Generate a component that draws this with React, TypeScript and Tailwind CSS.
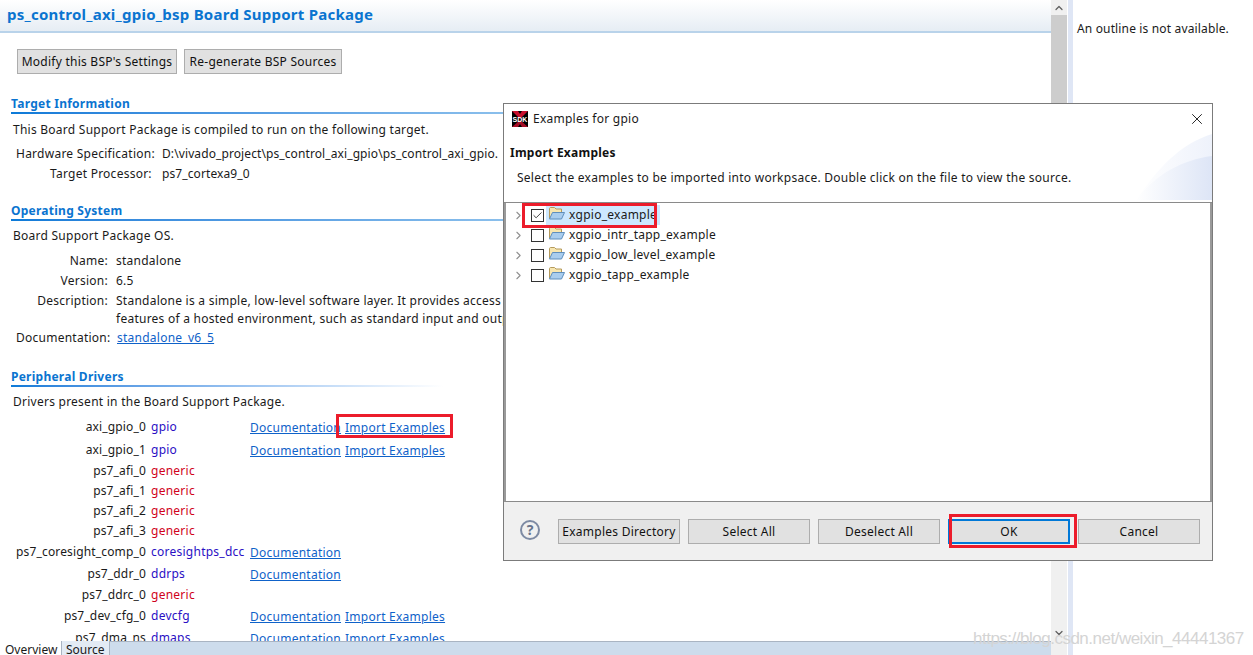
import React from 'react';
import { ChevronRight, ChevronUp, ChevronDown, X, Check } from 'lucide-react';

const font = { fontFamily: '"Noto Sans", "Liberation Sans", sans-serif' };

interface Driver {
  name: string;
  type: string;
  generic?: boolean;
  doc?: boolean;
  examples?: boolean;
  boxed?: boolean;
  h: string;
}

const drivers: Driver[] = [
  { name: 'axi_gpio_0', type: 'gpio', doc: true, examples: true, boxed: true, h: 'h-[24px]' },
  { name: 'axi_gpio_1', type: 'gpio', doc: true, examples: true, h: 'h-[22px]' },
  { name: 'ps7_afi_0', type: 'generic', generic: true, h: 'h-[20px]' },
  { name: 'ps7_afi_1', type: 'generic', generic: true, h: 'h-[20px]' },
  { name: 'ps7_afi_2', type: 'generic', generic: true, h: 'h-[20px]' },
  { name: 'ps7_afi_3', type: 'generic', generic: true, h: 'h-[20px]' },
  { name: 'ps7_coresight_comp_0', type: 'coresightps_dcc', doc: true, h: 'h-[22px]' },
  { name: 'ps7_ddr_0', type: 'ddrps', doc: true, h: 'h-[22px]' },
  { name: 'ps7_ddrc_0', type: 'generic', generic: true, h: 'h-[20px]' },
  { name: 'ps7_dev_cfg_0', type: 'devcfg', doc: true, examples: true, h: 'h-[22px]' },
  { name: 'ps7_dma_ns', type: 'dmaps', doc: true, examples: true, h: 'h-[22px]' },
];

const examples = ['xgpio_example', 'xgpio_intr_tapp_example', 'xgpio_low_level_example', 'xgpio_tapp_example'];

function Heading({ title, fade }: { title: string; fade?: boolean }) {
  return (
    <div>
      <div className="h-[17px] text-[12px] leading-[17px] font-bold text-[#0a74d0]">{title}</div>
      <div
        className={`h-[2px] bg-gradient-to-r from-[#0a7ad8] ${fade ? 'w-[432px] to-white' : 'w-[500px] to-[#8cc0ec]'}`}
      />
    </div>
  );
}

function Field({ label, children }: { label: string; children: React.ReactNode }) {
  return (
    <div className="flex h-[20px] items-center">
      <div className="w-[105px] pr-[8px] text-right">{label}</div>
      {children}
    </div>
  );
}

function DialogButton({ label, focused }: { label: string; focused?: boolean }) {
  return (
    <button
      className={`h-[25px] w-[122px] bg-[#e1e1e1] text-[12px] text-[#111] ${focused ? 'border-2 border-[#0078d7]' : 'border border-[#adadad]'}`}
    >
      {label}
    </button>
  );
}

function FolderIcon() {
  return (
    <svg width="16" height="13" viewBox="0 0 16 13" className="mt-[-4px] shrink-0">
      <path d="M0.5 11.5V1.5C0.5 1 1 0.5 1.5 0.5H5.5L7 2H12.5V5" fill="#f7e6b0" stroke="#b59a5c" strokeWidth="1" />
      <path d="M0.5 12L3.5 5.5H15.5L12.5 12Z" fill="#a9cdee" stroke="#5f8fbd" strokeWidth="1" strokeLinejoin="round" />
    </svg>
  );
}

function SdkLogo() {
  return (
    <div className="relative flex h-[16px] w-[16px] items-center justify-center bg-black">
      <svg width="16" height="16" viewBox="0 0 16 16" className="absolute inset-0">
        <path d="M0 0H6L8 3L10 0H16L8 8Z" fill="#c8102e" />
        <path d="M0 16H6L8 13L10 16H16L8 9Z" fill="#a50d26" />
      </svg>
      <span
        className="relative text-[7px] leading-none font-bold tracking-normal text-white"
        style={{ fontFamily: '"Liberation Sans", sans-serif' }}
      >
        SDK
      </span>
    </div>
  );
}

export default function App() {
  return (
    <div className="relative flex h-[655px] w-[1253px] overflow-hidden bg-white text-[12px] tracking-[0.25px] text-[#1a1a1a]" style={font}>
      {/* Editor */}
      <div className="flex w-[1051px] flex-col">
        <div className="flex h-[33px] shrink-0 items-center border-b-2 border-[#b9d3ea] bg-gradient-to-b from-white to-[#e6edf4] pb-[2px] pl-[7px] text-[15px] font-bold whitespace-nowrap text-[#0a74d0]">
          ps_control_axi_gpio_bsp Board Support Package
        </div>
        <div className="min-h-0 flex-1 overflow-hidden pl-[11px]">
          <div className="mt-[16px] flex gap-[7px] pl-[6px]">
            <button className="h-[25px] w-[160px] border border-[#adadad] bg-[#e1e1e1] text-[12px] text-[#111]">
              Modify this BSP's Settings
            </button>
            <button className="h-[25px] w-[158px] border border-[#adadad] bg-[#e1e1e1] text-[12px] text-[#111]">
              Re-generate BSP Sources
            </button>
          </div>

          <div className="mt-[21px]">
            <Heading title="Target Information" />
          </div>
          <div className="mt-[6px] h-[20px] pl-[2px] leading-[20px]">This Board Support Package is compiled to run on the following target.</div>
          <div className="mt-[4px] flex h-[20px] items-center">
            <div className="w-[146px] pl-[5px] whitespace-nowrap">Hardware Specification:</div>
            <div className="pl-[5px] tracking-[0.1px] whitespace-nowrap">D:\vivado_project\ps_control_axi_gpio\ps_control_axi_gpio.</div>
          </div>
          <div className="flex h-[20px] items-center">
            <div className="w-[146px] pl-[39px] whitespace-nowrap">Target Processor:</div>
            <div className="pl-[5px] tracking-[0.1px]">ps7_cortexa9_0</div>
          </div>

          <div className="mt-[18px]">
            <Heading title="Operating System" />
          </div>
          <div className="mt-[5px] h-[20px] pl-[2px] leading-[20px]">Board Support Package OS.</div>
          <div className="mt-[5px]">
            <Field label="Name:">standalone</Field>
            <Field label="Version:">6.5</Field>
            <Field label="Description:">
              <span className="whitespace-nowrap">Standalone is a simple, low-level software layer. It provides access to basic processor</span>
            </Field>
            <div className="h-[15px] pl-[105px] leading-[15px] whitespace-nowrap">features of a hosted environment, such as standard input and output</div>
            <div className="mt-[1px] flex h-[22px] items-center">
              <div className="w-[106px] pl-[5px] whitespace-nowrap">Documentation:</div>
              <a className="text-[#0f62c9] underline">standalone_v6_5</a>
            </div>
          </div>

          <div className="mt-[19px]">
            <Heading title="Peripheral Drivers" fade />
          </div>
          <div className="mt-[5px] h-[20px] pl-[2px] leading-[20px]">Drivers present in the Board Support Package.</div>
          <div className="mt-[3px]">
            {drivers.map((d) => (
              <div key={d.name} className={`flex items-center ${d.h}`}>
                <div className="w-[135px] text-right tracking-[0.15px] whitespace-nowrap">{d.name}</div>
                <div className={`w-[104px] pl-[5px] whitespace-nowrap ${d.generic ? 'text-[#d0021b]' : 'text-[#2a0fc4]'}`}>{d.type}</div>
                {d.doc && <a className="mt-[2px] w-[95px] text-[#0f62c9] underline">Documentation</a>}
                {d.examples && (
                  <span className={`mt-[2px] ${d.boxed ? 'relative' : ''}`}>
                    <a className="text-[#0f62c9] underline">Import Examples</a>
                    {d.boxed && (
                      <span className="absolute top-[-5px] left-[-9px] h-[24px] w-[117px] border-[3px] border-[#ec1c2b]" />
                    )}
                  </span>
                )}
              </div>
            ))}
          </div>
        </div>
        {/* Editor tabs */}
        <div className="flex h-[14px] shrink-0 items-start border-t border-[#a9b4c2] bg-[#cddcec] tracking-normal">
          <div className="-mt-px h-[15px] w-[61px] bg-white pl-[5px] leading-[18px]">Overview</div>
          <div className="-mt-px h-[15px] w-[49px] border-x border-[#a9b4c2] bg-[#e3ebf4] pl-[4px] leading-[18px]">Source</div>
        </div>
      </div>

      {/* Scrollbar */}
      <div className="flex w-[16px] flex-col items-center bg-[#f0f0f0]">
        <ChevronUp size={12} strokeWidth={2.5} className="mt-[2px] h-[12px] text-[#606060]" />
        <div className="mt-px h-[480px] w-full bg-[#cdcdcd]" />
        <div className="flex-1" />
        <ChevronDown size={12} strokeWidth={2.5} className="mb-[16px] text-[#606060]" />
      </div>
      <div className="ml-px w-[5px] bg-[#dfe6f5]" />

      {/* Outline */}
      <div className="flex-1 pt-[20px] pl-[4px] tracking-[0.15px] whitespace-nowrap">An outline is not available.</div>

      {/* Dialog */}
      <div className="absolute top-[103px] left-[503px] flex h-[458px] w-[710px] flex-col border border-[#7b7b7b] bg-white">
        <div className="flex h-[30px] shrink-0 items-center pl-[8px]">
          <SdkLogo />
          <span className="ml-[5px]">Examples for gpio</span>
          <X size={18} strokeWidth={1.2} className="mr-[6px] ml-auto text-[#111]" />
        </div>
        <div className="relative h-[69px] shrink-0 overflow-hidden border-b border-[#8a8a8a]">
          <svg width="76" height="68" viewBox="0 0 76 68" className="absolute right-0 bottom-0">
            <defs>
              <linearGradient id="waveTop" x1="0" y1="0" x2="1" y2="0">
                <stop offset="0" stopColor="#ffffff" />
                <stop offset="1" stopColor="#eef2fb" />
              </linearGradient>
              <linearGradient id="waveLow" x1="0" y1="0" x2="1" y2="0">
                <stop offset="0" stopColor="#ffffff" />
                <stop offset="1" stopColor="#dde5f6" />
              </linearGradient>
            </defs>
            <path d="M0 66C22 34 44 10 76 0V66Z" fill="url(#waveTop)" />
            <path d="M0 66C20 40 46 26 76 22V66Z" fill="url(#waveLow)" />
          </svg>
          <div className="relative pt-[10px] pl-[6px] font-bold text-[#111]">Import Examples</div>
          <div className="relative mt-[7px] pl-[13px]">Select the examples to be imported into workpsace. Double click on the file to view the source.</div>
        </div>
        <div className="h-[299px] shrink-0 border-x-2 border-b border-[#8a8a8a] border-x-[#9a9a9a] pt-[2px]">
          {examples.map((name, i) => (
            <div key={name} className="flex h-[20px] items-center pl-[6px]">
              <ChevronRight size={13} strokeWidth={2} className="text-[#909090]" />
              <div className="ml-[6px] flex h-[13px] w-[13px] items-center justify-center border border-[#333] bg-white">
                {i === 0 && <Check size={11} strokeWidth={2} className="text-[#333]" />}
              </div>
              <div className={`ml-[2px] flex h-[20px] items-center pr-[3px] pl-[3px] ${i === 0 ? 'relative bg-[#cde8ff]' : ''}`}>
                <FolderIcon />
                <span className="ml-[4px]">{name}</span>
                {i === 0 && (
                  <span className="absolute top-[-2px] left-[-24px] h-[25px] w-[135px] border-[3px] border-[#ec1c2b]" />
                )}
              </div>
            </div>
          ))}
        </div>
        <div className="flex flex-1 items-center gap-[8px] bg-[#f0f0f0] pt-[1px] pl-[54px]">
          <div className="absolute bottom-[20px] left-[16px] flex h-[20px] w-[20px] items-center justify-center rounded-full border-2 border-[#7d8aa3] text-[14px] leading-none font-bold tracking-normal text-[#66738c]">
            ?
          </div>
          <DialogButton label="Examples Directory" />
          <DialogButton label="Select All" />
          <DialogButton label="Deselect All" />
          <div className="relative">
            <DialogButton label="OK" focused />
            <span className="absolute top-[-5px] left-[1px] h-[34px] w-[128px] border-[3px] border-[#ec1c2b]" />
          </div>
          <DialogButton label="Cancel" />
        </div>
      </div>

      {/* Watermark */}
      <div className="absolute top-[626px] left-[973px] text-[17px] tracking-[-0.5px] whitespace-nowrap text-[#d4d4d4]" style={{ fontFamily: '"Liberation Sans", sans-serif' }}>
        https://blog.csdn.net/weixin_44441367
      </div>
    </div>
  );
}
